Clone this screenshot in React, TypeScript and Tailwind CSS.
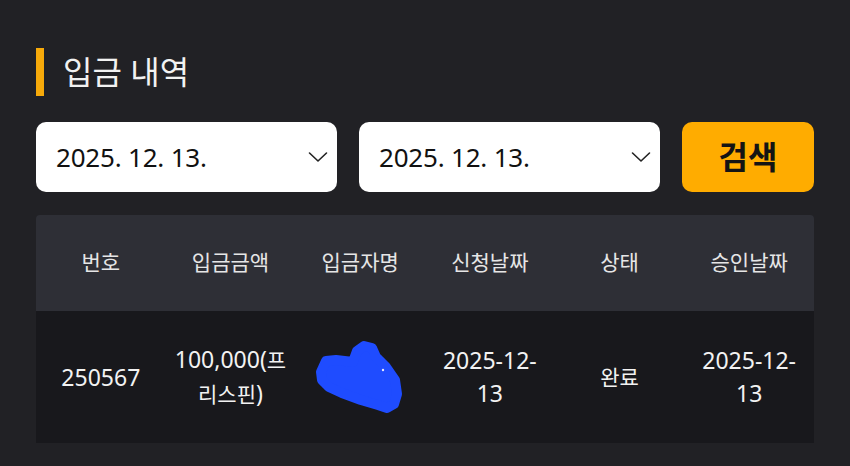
const font = "font-['Noto_Sans','Noto_Sans_CJK_KR',sans-serif]";

const Chevron = () => (
  <svg width="20" height="12" viewBox="0 0 20 12" fill="none">
    <path d="M1.5 2 L10 10 L18.5 2" stroke="#222" strokeWidth="1.6" strokeLinecap="round" strokeLinejoin="round" />
  </svg>
);

const DateBox = ({ value }: { value: string }) => (
  <div className="flex h-[70px] w-[301px] items-center justify-between rounded-[10px] bg-white pl-[20px] pr-[9px]">
    <span className="text-[26px] text-[#111] tracking-[-0.2px]">{value}</span>
    <Chevron />
  </div>
);

// 가림 처리된 입금자명 (파란 낙서)
const Blob = () => (
  <svg width="92" height="82" viewBox="0 0 92 82" className="absolute left-[18px] top-[27px]">
    <path
      d="M8 34 L13 23 L23 22 L40 24 L44 13 L51 8 L59 10 L63 19 L73 29 L82 42 L84 56 L81 66 L74 70 L65 67 L48 62 L29 55 L16 49 L9 42 Z"
      fill="#1f4cff"
      stroke="#1f4cff"
      strokeWidth="10"
      strokeLinejoin="round"
    />
    <circle cx="70" cy="32" r="1.2" fill="#e8e8ff" />
  </svg>
);

const headers = ['번호', '입금금액', '입금자명', '신청날짜', '상태', '승인날짜'];

export default function App() {
  return (
    <div className={`${font} h-[466px] w-[850px] overflow-hidden bg-[#212125] pl-[36px] pr-[36px] pt-[48px]`}>
      <div className="flex items-center gap-[19px]">
        <div className="h-[48px] w-[8px] bg-[#f7aa0a]" />
        <h1 className="text-[32px] leading-[48px] text-[#f2f2f2]">입금 내역</h1>
      </div>

      <div className="mt-[26px] flex gap-[22px]">
        <DateBox value="2025. 12. 13." />
        <DateBox value="2025. 12. 13." />
        <button className="flex h-[70px] w-[132px] items-center justify-center rounded-[10px] bg-[#ffac00] text-[32px] font-bold text-[#141414]">
          검색
        </button>
      </div>

      <div className="mt-[23px] w-[778px]">
        <div className="grid h-[96px] grid-cols-6 items-center rounded-t-[4px] bg-[#2e2f36]">
          {headers.map((h) => (
            <div key={h} className="text-center text-[21px] text-[#e6e6e6]">
              {h}
            </div>
          ))}
        </div>
        <div className="grid h-[132px] grid-cols-6 items-center bg-[#18181c] text-[23px] leading-[33px] text-[#f2f2f2]">
          <div className="text-center">250567</div>
          <div className="text-center">
            100,000(<span className="text-[21px]">프</span>
            <br />
            <span className="text-[21px]">리스핀</span>)
          </div>
          <div className="relative h-full">
            <Blob />
          </div>
          <div className="text-center">
            2025-12-
            <br />
            13
          </div>
          <div className="text-center text-[21px]">완료</div>
          <div className="text-center">
            2025-12-
            <br />
            13
          </div>
        </div>
      </div>
    </div>
  );
}
